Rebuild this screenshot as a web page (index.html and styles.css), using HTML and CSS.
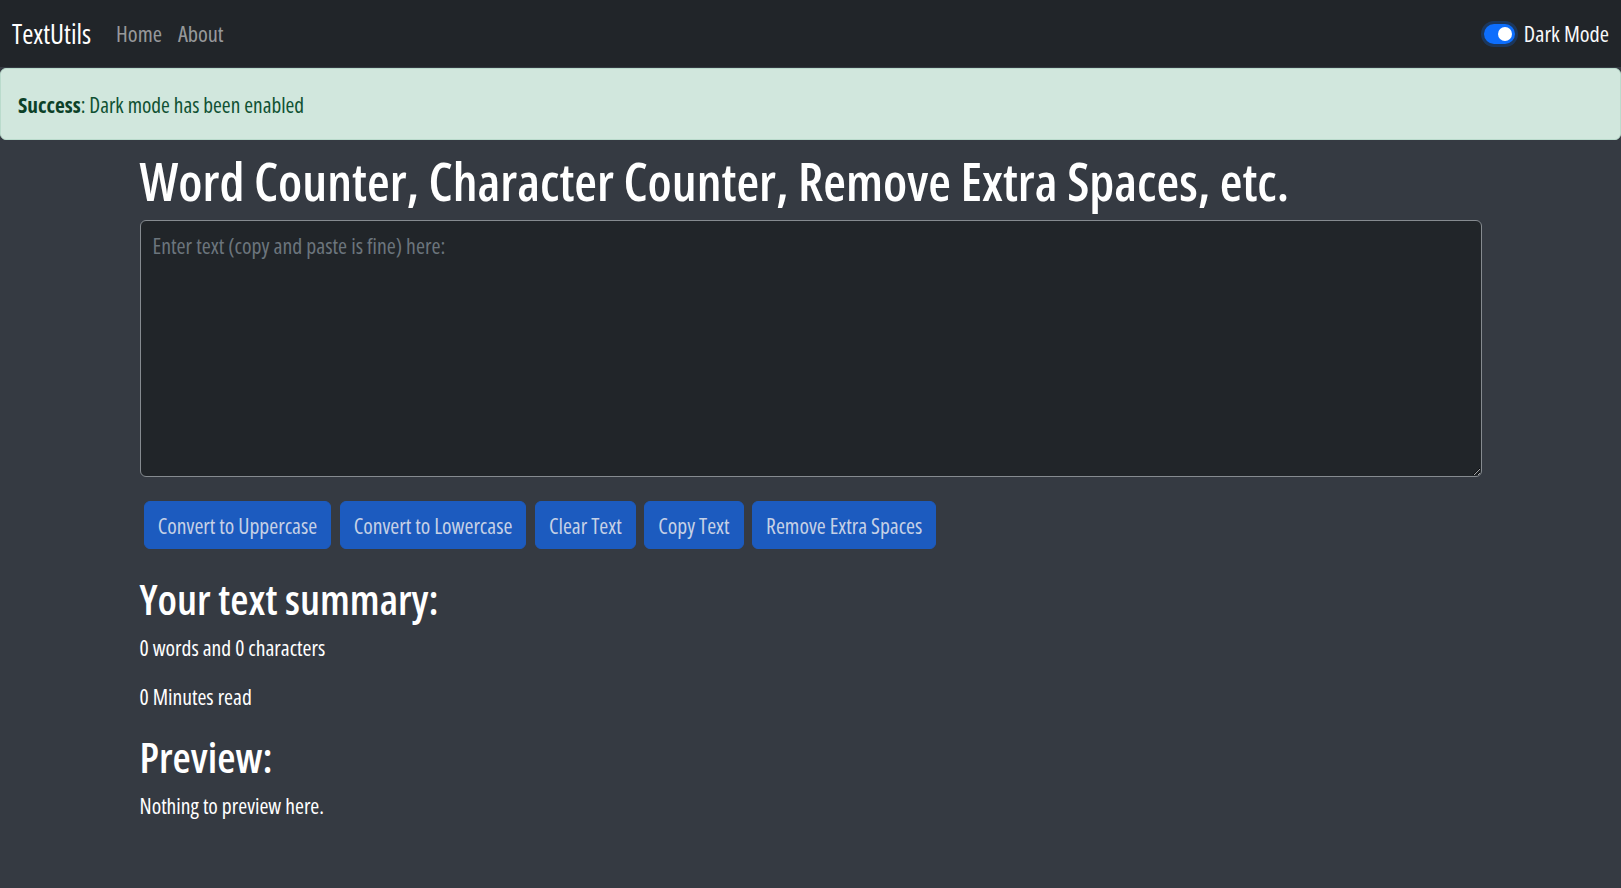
FILE: index.html
```html
<!DOCTYPE html>
<html lang="en">
<head>
<meta charset="utf-8">
<title>TextUtils</title>
<link rel="stylesheet" href="styles.css">
</head>
<body>
<nav class="navbar">
  <div class="nav-left">
    <a class="brand" href="#">TextUtils</a>
    <ul class="nav-links">
      <li><a href="#">Home</a></li>
      <li><a href="#">About</a></li>
    </ul>
  </div>
  <div class="mode-switch">
    <span class="switch"><span class="knob"></span></span>
    <label class="switch-label">Dark Mode</label>
  </div>
</nav>

<div class="alert" role="alert">
  <strong>Success</strong>: Dark mode has been enabled
</div>

<main class="container">
  <h1 class="title">Word Counter, Character Counter, Remove Extra Spaces, etc.</h1>
  <textarea class="text-input" placeholder="Enter text (copy and paste is fine) here:"></textarea>
  <div class="actions">
    <button class="btn">Convert to Uppercase</button>
    <button class="btn">Convert to Lowercase</button>
    <button class="btn">Clear Text</button>
    <button class="btn">Copy Text</button>
    <button class="btn">Remove Extra Spaces</button>
  </div>
  <section class="summary">
    <h2 class="sub">Your text summary:</h2>
    <p class="line">0 words and 0 characters</p>
    <p class="line">0 Minutes read</p>
    <h2 class="sub">Preview:</h2>
    <p class="line">Nothing to preview here.</p>
  </section>
</main>
</body>
</html>
```
FILE: styles.css
```css
* { box-sizing: border-box; }
html, body { height: 100%; }
body {
  margin: 0;
  background: #353a42;
  color: #ffffff;
  font-family: "Open Sans", "Noto Sans", sans-serif;
  font-stretch: 75%;
  font-size: 21.6px;
}

.navbar {
  height: 67px;
  background: #212529;
  display: flex;
  align-items: center;
  justify-content: space-between;
  padding: 0 12px;
}
.nav-left { display: flex; align-items: center; }
.brand {
  color: #ffffff;
  text-decoration: none;
  font-size: 27px;
  margin-right: 17px;
}
.nav-links {
  list-style: none;
  margin: 0;
  padding: 0;
  display: flex;
}
.nav-links a {
  display: block;
  padding: 0 8px;
  color: rgba(255, 255, 255, 0.55);
  text-decoration: none;
  font-size: 22.3px;
}
.mode-switch {
  display: flex;
  align-items: center;
}
.switch {
  position: relative;
  width: 31px;
  height: 20px;
  border-radius: 10px;
  background: #0d6efd;
  box-shadow: 0 0 0 3px rgba(13, 110, 253, 0.25);
  margin-right: 9px;
  display: block;
}
.knob {
  position: absolute;
  right: 3px;
  top: 3px;
  width: 14px;
  height: 14px;
  border-radius: 50%;
  background: #ffffff;
}
.switch-label {
  color: #f8f9fa;
  font-size: 22.3px;
}

.alert {
  height: 72px;
  margin-top: 1px;
  display: flex;
  align-items: center;
  padding: 0 17px;
  background: #d1e7dd;
  border: 1px solid #badbcc;
  border-radius: 6px;
  color: #0f5132;
  font-size: 21.3px;
}
.alert strong { font-weight: 700; color: #0c4128; }

.container {
  width: 1342px;
  margin: 0 auto;
}
.title {
  margin: 10px 0 8px;
  font-size: 52.2px;
  line-height: 62px;
  font-weight: 600;
  white-space: nowrap;
}
.text-input {
  display: block;
  width: 100%;
  height: 257px;
  padding: 9px 12px;
  background: #212529;
  border: 1px solid #868b90;
  border-radius: 6px;
  color: #fff;
  font-family: inherit;
  font-stretch: 75%;
  font-size: 21.8px;
  line-height: 1.5;
  resize: vertical;
}
.text-input::placeholder { color: #6c757d; }

.actions {
  display: flex;
  margin-top: 24px;
}
.btn {
  height: 48px;
  margin: 0 4.3px;
  padding: 0 13px;
  background: #1c5bbf;
  border: 1px solid #1c5bbf;
  border-radius: 6px;
  color: #c6d1e6;
  font-family: inherit;
  font-stretch: 75%;
  font-size: 21.6px;
}

.summary { margin-top: 25px; }
.sub {
  margin: 0 0 8px;
  font-size: 42px;
  line-height: 50px;
  font-weight: 600;
}
.line {
  margin: 0 0 17px;
  line-height: 32px;
}
.line + .sub { margin-top: 19px; }
```
